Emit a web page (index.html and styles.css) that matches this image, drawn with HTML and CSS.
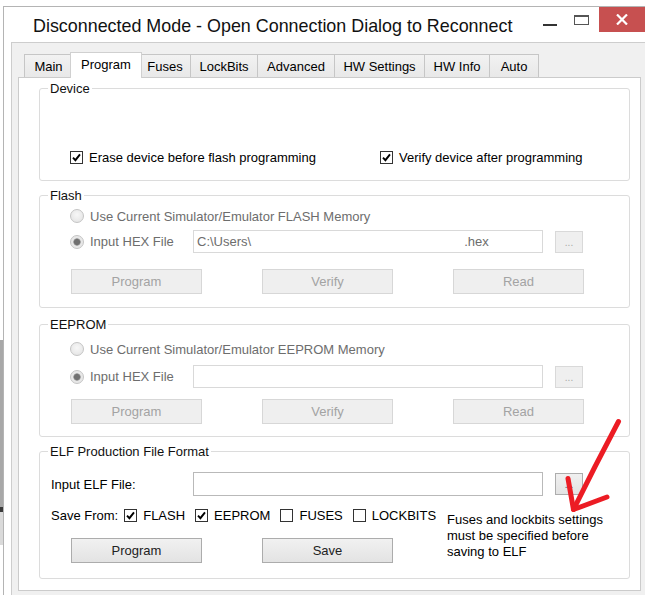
FILE: index.html
```html
<!DOCTYPE html>
<html lang="en">
  <head>
    <meta charset="UTF-8" />
    <meta name="viewport" content="width=device-width, initial-scale=1.0" />
    <title>Disconnected Mode - Program</title>
    <link rel="stylesheet" href="styles.css">
  </head>
  <body>
    <div class="window">
      <div class="titlebar">
        <span class="title">Disconnected Mode - Open Connection Dialog to Reconnect</span>
        <div class="controls">
          <span class="ctl-min"></span>
          <span class="ctl-max"></span>
          <span class="ctl-close">
            <svg width="12" height="11" viewBox="0 0 12 11"><path d="M1 0.5 L11 10.5 M11 0.5 L1 10.5" stroke="#fff" stroke-width="2.2" fill="none"/></svg>
          </span>
        </div>
      </div>

      <div class="client">
        <ul class="tabs">
          <li>Main</li>
          <li class="current">Program</li>
          <li>Fuses</li>
          <li>LockBits</li>
          <li>Advanced</li>
          <li>HW Settings</li>
          <li>HW Info</li>
          <li>Auto</li>
        </ul>

        <div class="page">
          <!-- device -->
          <div class="group device">
            <div class="group-title">Device</div>
            <div class="device-row">
              <div class="check-item">
                <span class="check"><svg width="9" height="9" viewBox="0 0 9 9"><path d="M1 4.6 L3.4 7.2 L8 1.3" stroke="#000" stroke-width="1.9" fill="none"/></svg></span>
                Erase device before flash programming
              </div>
              <div class="check-item">
                <span class="check"><svg width="9" height="9" viewBox="0 0 9 9"><path d="M1 4.6 L3.4 7.2 L8 1.3" stroke="#000" stroke-width="1.9" fill="none"/></svg></span>
                Verify device after programming
              </div>
            </div>
          </div>

          <!-- flash -->
          <div class="group flash">
            <div class="group-title">Flash</div>
            <div class="radio-row"><span class="radio"></span>Use Current Simulator/Emulator FLASH Memory</div>
            <div class="file-row">
              <div class="file-label"><span class="radio on"></span>Input HEX File</div>
              <div class="textbox disabled"><span>C:\Users\</span><span class="ext">.hex</span></div>
              <span class="browse disabled">...</span>
            </div>
            <div class="button-row">
              <span class="button disabled">Program</span>
              <span class="button disabled">Verify</span>
              <span class="button disabled">Read</span>
            </div>
          </div>

          <!-- eeprom -->
          <div class="group eeprom">
            <div class="group-title">EEPROM</div>
            <div class="radio-row"><span class="radio"></span>Use Current Simulator/Emulator EEPROM Memory</div>
            <div class="file-row">
              <div class="file-label"><span class="radio on"></span>Input HEX File</div>
              <div class="textbox disabled"></div>
              <span class="browse disabled">...</span>
            </div>
            <div class="button-row">
              <span class="button disabled">Program</span>
              <span class="button disabled">Verify</span>
              <span class="button disabled">Read</span>
            </div>
          </div>

          <!-- elf -->
          <div class="group elf">
            <div class="group-title">ELF Production File Format</div>
            <div class="elf-body">
              <div class="file-row">
                <div class="file-label">Input ELF File:</div>
                <div class="textbox"></div>
                <span class="browse">...</span>
              </div>
              <div class="elf-bottom">
                <div class="elf-left">
                  <div class="save-row">
                    <span class="save-label">Save From:</span>
                    <div class="check-item">
                      <span class="check"><svg width="9" height="9" viewBox="0 0 9 9"><path d="M1 4.6 L3.4 7.2 L8 1.3" stroke="#000" stroke-width="1.9" fill="none"/></svg></span>
                      FLASH
                    </div>
                    <div class="check-item">
                      <span class="check"><svg width="9" height="9" viewBox="0 0 9 9"><path d="M1 4.6 L3.4 7.2 L8 1.3" stroke="#000" stroke-width="1.9" fill="none"/></svg></span>
                      EEPROM
                    </div>
                    <div class="check-item"><span class="check"></span>FUSES</div>
                    <div class="check-item"><span class="check"></span>LOCKBITS</div>
                  </div>
                  <div class="button-row">
                    <span class="button">Program</span>
                    <span class="button">Save</span>
                  </div>
                </div>
                <div class="note">Fuses and lockbits settings<br>must be specified before<br>saving to ELF</div>
              </div>
            </div>
          </div>
        </div>
      </div>
    </div>

    <!-- red arrow drawn on top of the screenshot -->
    <svg class="arrow" width="645" height="595" viewBox="0 0 645 595">
      <path d="M618.5 421.5 C605 447 590 476 573.5 509.5" stroke="#ec1c24" stroke-width="5" fill="none" stroke-linecap="round"/>
      <path d="M568 478.5 L573.5 509.5 L607 497" stroke="#ec1c24" stroke-width="5" fill="none" stroke-linecap="round" stroke-linejoin="round"/>
    </svg>
  </body>
</html>
```

FILE: styles.css
```css
html,
body,
ul,
li {
  margin: 0;
  padding: 0;
}
ul {
  list-style: none;
}
html,
body {
  overflow: hidden;
}
body {
  position: relative;
  width: 645px;
  height: 595px;
  font-family: "Liberation Sans", Arial, sans-serif;
  font-size: 13px;
  color: #000;
  /* bits of other windows peeking out on the left */
  background: linear-gradient(
    to bottom,
    #fff 0,
    #fff 340px,
    #a8a8a8 340px,
    #a8a8a8 507px,
    #3a3a3a 507px,
    #3a3a3a 512px,
    #dadada 512px,
    #dadada 545px,
    #fff 545px
  );
}

/* window frame */
.window {
  box-sizing: border-box;
  width: 642px;
  height: 600px;
  margin: 6px 0 0 3px;
  border-top: 1px solid #b4b4b4;
  border-left: 1px solid #b4b4b4;
  background: #fff;
}
.titlebar {
  display: flex;
  align-items: flex-start;
  height: 35px;
}
.title {
  margin: 7px 0 0 29px;
  font-size: 17.9px;
  line-height: 24px;
  color: #111;
}
.controls {
  display: flex;
  align-items: flex-start;
  margin-left: auto;
}
.ctl-min {
  width: 14px;
  height: 2px;
  margin: 17px 17px 0 0;
  background: #333;
}
.ctl-max {
  box-sizing: border-box;
  width: 15px;
  height: 10px;
  margin: 8px 10px 0 0;
  border: 1px solid #555;
  border-top-width: 2px;
}
.ctl-close {
  display: flex;
  align-items: center;
  justify-content: center;
  width: 46px;
  height: 25px;
  background: #c75050;
}

/* client area */
.client {
  box-sizing: border-box;
  height: 560px;
  margin-left: 7px;
  padding: 9px 0 0 6px;
  border-top: 1px solid #cdcdcd;
  border-left: 1px solid #cdcdcd;
  background: #f0f0f0;
}

/* tab strip */
.tabs {
  position: relative;
  z-index: 1;
  display: flex;
  align-items: flex-end;
  height: 26px;
  margin: 0 0 -1px 6px;
}
.tabs li {
  box-sizing: border-box;
  display: flex;
  align-items: center;
  justify-content: center;
  height: 23px;
  margin: 0 0 1px -1px;
  border: 1px solid #c6c6c6;
  border-bottom: none;
  background: linear-gradient(#f2f2f2, #e8e8e8);
  cursor: pointer;
}
.tabs li:first-child {
  margin-left: 0;
}
.tabs li:nth-child(1) { width: 49px; }
.tabs li:nth-child(2) { width: 68px; }
.tabs li:nth-child(3) { width: 52px; }
.tabs li:nth-child(4) { width: 68px; }
.tabs li:nth-child(5) { width: 78px; }
.tabs li:nth-child(6) { width: 91px; }
.tabs li:nth-child(7) { width: 66px; }
.tabs li:nth-child(8) { width: 50px; }
.tabs li.current {
  position: relative;
  z-index: 2;
  width: 72px;
  height: 26px;
  margin: 0 -2px 0 -3px;
  padding-bottom: 3px;
  border-color: #d0d0d0;
  background: #fff;
}

/* tab page */
.page {
  box-sizing: border-box;
  width: 623px;
  height: 514px;
  padding: 0 10px 0 20px;
  border: 1px solid #cbcbcb;
  background: #fff;
}

/* group boxes */
.group {
  box-sizing: border-box;
  width: 591px;
  border: 1px solid #dcdcdc;
  border-radius: 3px;
}
.group-title {
  width: fit-content;
  margin: -8px 0 0 8px;
  padding: 0 2px;
  line-height: 15px;
  background: #fff;
  color: #111;
}
.device {
  margin-top: 10px;
  padding-bottom: 14px;
}
.flash {
  margin-top: 14px;
  padding-bottom: 13px;
}
.eeprom {
  margin-top: 16px;
  padding-bottom: 12px;
}
.elf {
  margin-top: 14px;
  padding-bottom: 15px;
}
.elf-body {
  padding-left: 11px;
}

/* check boxes and radio buttons */
.check-item {
  display: flex;
  align-items: center;
  height: 18px;
  white-space: nowrap;
}
.check {
  box-sizing: border-box;
  display: flex;
  align-items: center;
  justify-content: center;
  flex: none;
  width: 13px;
  height: 13px;
  margin-right: 6px;
  border: 1px solid #333;
  background: #fff;
}
.radio {
  box-sizing: border-box;
  flex: none;
  width: 14px;
  height: 14px;
  margin-right: 6px;
  border: 1px solid #c4c4c4;
  border-radius: 50%;
  background: radial-gradient(circle at 50% 40%, #f7f7f7, #e1e1e1);
}
.radio.on {
  background: radial-gradient(circle, #707070 0, #707070 2.6px, #9a9a9a 3.4px, #e6e6e6 4px, #ececec 100%);
}

.device-row {
  display: grid;
  grid-template-columns: 310px auto;
  margin-top: 52px;
  padding-left: 30px;
}

.radio-row {
  display: flex;
  align-items: center;
  height: 18px;
  padding-left: 30px;
  color: #6d6d6d;
}
.flash .radio-row {
  margin-top: 4px;
}
.eeprom .radio-row {
  margin-top: 8px;
}

/* file input rows */
.file-row {
  display: flex;
  align-items: center;
  height: 23px;
  padding-left: 30px;
}
.flash .file-row {
  margin-top: 5px;
}
.eeprom .file-row {
  margin-top: 7px;
}
.elf .file-row {
  height: 24px;
  margin-top: 13px;
  padding-left: 0;
}
.file-label {
  display: flex;
  align-items: center;
  width: 123px;
  color: #6d6d6d;
}
.elf .file-label {
  width: 142px;
  color: #000;
}
.textbox {
  box-sizing: border-box;
  display: flex;
  align-items: center;
  width: 350px;
  height: 100%;
  padding-left: 3px;
  border: 1px solid #b9b9b9;
  background: #fff;
}
.textbox.disabled {
  border-color: #d9d9d9;
  color: #6d6d6d;
}
.textbox .ext {
  margin-left: 213px;
}
.browse {
  box-sizing: border-box;
  display: flex;
  align-items: flex-end;
  justify-content: center;
  width: 28px;
  height: 22px;
  margin-left: 12px;
  padding-bottom: 4px;
  border: 1px solid #adadad;
  background: linear-gradient(#f0f0f0, #e3e3e3);
  font-size: 10px;
  line-height: 10px;
  color: #555;
}
.browse.disabled {
  border-color: #d9d9d9;
  background: #efefef;
  color: #a8a8a8;
}

/* push buttons */
.button-row {
  display: flex;
  gap: 60px;
  padding-left: 31px;
}
.flash .button-row {
  margin-top: 16px;
}
.eeprom .button-row {
  margin-top: 11px;
}
.elf .button-row {
  margin-top: 14px;
  padding-left: 20px;
}
.button {
  box-sizing: border-box;
  display: flex;
  align-items: center;
  justify-content: center;
  width: 131px;
  height: 25px;
  border: 1px solid #acacac;
  background: linear-gradient(#f1f1f1, #e3e3e3);
  color: #222;
}
.button.disabled {
  border-color: #d7d7d7;
  background: #efefef;
  color: #a3a3a3;
}

/* elf lower part */
.elf-bottom {
  display: flex;
  align-items: flex-start;
  margin-top: 10px;
}
.elf-left {
  width: 396px;
}
.save-row {
  display: flex;
  align-items: center;
  gap: 10px;
  height: 18px;
}
.save-label {
  margin-right: -4px;
}
.note {
  margin-top: 6px;
  line-height: 16px;
  white-space: nowrap;
}

.arrow {
  position: absolute;
  top: 0;
  left: 0;
  pointer-events: none;
}
```
